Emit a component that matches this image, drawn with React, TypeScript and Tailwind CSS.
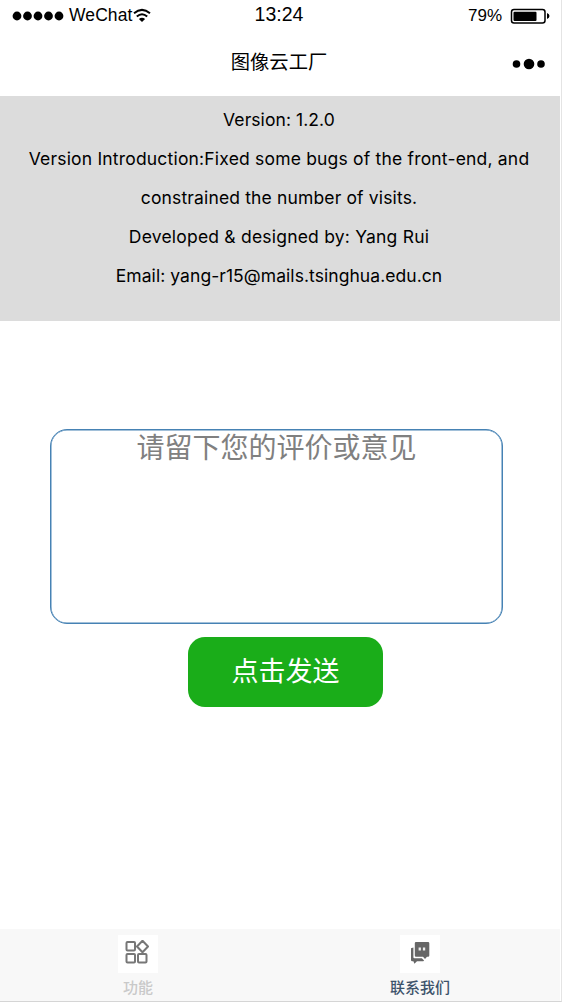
import React from 'react';

function StatusBar() {
  return (
    <div className="grid h-[32px] grid-cols-3 font-['Liberation_Sans',sans-serif] text-[17px] leading-[31px]">
      <div className="flex pl-[12px]">
        <svg className="mt-[11px] mr-[4px] h-[10px] w-[53px] shrink-0" viewBox="0 0 53 10">
          {[5, 15.5, 26, 36.5, 47].map((x) => (
            <circle key={x} cx={x} cy="5" r="4.4" />
          ))}
        </svg>
        <span className="w-[64px] text-[17.5px] leading-[30px] tracking-[0.1px]">WeChat</span>
        <svg className="mt-[8px] h-[15px] w-[18px] shrink-0" viewBox="0 0 18 15" fill="none" stroke="#000">
          <path d="M1 5.2Q9-1.4 17 5.2" strokeWidth="2" />
          <path d="M3.8 8.5Q9 4 14.2 8.5" strokeWidth="2" />
          <path d="M5.9 11.1Q9 8.2 12.1 11.1L9 14Z" fill="#000" stroke="none" />
        </svg>
      </div>
      <div className="pr-[2px] text-center text-[19.5px] leading-[29px]">13:24</div>
      <div className="flex justify-end pr-[10px]">
        <span className="mr-[8px] leading-[32px]">79%</span>
        <svg className="mt-[8px] h-[16px] w-[40px]" viewBox="0 0 40 16">
          <rect x="1.5" y="1.5" width="33.5" height="13.5" rx="2.5" fill="none" stroke="#000" strokeWidth="1.5" />
          <rect x="3.5" y="3.7" width="23" height="9.3" rx="1" />
          <path d="M37 5Q39.5 6 39.5 8T37 11Z" />
        </svg>
      </div>
    </div>
  );
}

export default function App() {
  return (
    <div className="flex h-[1002px] w-[562px] flex-col border-r border-b border-r-[#e4e4e4] border-b-[#d5d5d5] bg-white pr-px font-['Inter','Noto_Sans_CJK_SC',sans-serif] text-black">
      <StatusBar />
      <header className="grid h-[64px] grid-cols-[1fr_auto_1fr] items-center">
        <span />
        <h1 className="mr-[2px] mb-[6px] font-['Noto_Sans_CJK_SC',sans-serif] text-[19.3px] leading-[30px]">图像云工厂</h1>
        <svg className="mr-[14px] h-[12px] w-[34px] justify-self-end" viewBox="0 0 34 12">
          <circle cx="4.5" cy="6" r="3.8" />
          <circle cx="17" cy="6" r="5.3" />
          <circle cx="29" cy="6" r="3.8" />
        </svg>
      </header>
      <section className="h-[225px] bg-[#dcdcdc] pt-[4px] pr-[2px] text-center text-[17.5px] leading-[39px] whitespace-nowrap">
        <p className="tracking-[0.08px]">Version: 1.2.0</p>
        <p className="tracking-[0.19px]">Version Introduction:Fixed some bugs of the front-end, and</p>
        <p className="tracking-[0.15px]">constrained the number of visits.</p>
        <p className="tracking-[0.21px]">Developed &amp; designed by: Yang Rui</p>
        <p className="tracking-[0.06px]">Email: yang-r15@mails.tsinghua.edu.cn</p>
      </section>
      <main className="flex flex-1 flex-col pt-[108px]">
        <textarea
          placeholder="请留下您的评价或意见"
          className="ml-[50px] h-[195px] w-[453px] resize-none rounded-[17px] border border-[#4682b4] px-2 text-center font-['Noto_Sans_CJK_SC',sans-serif] text-[28px] leading-[33px] shadow-[inset_0_0_0_0.5px_#4682b4] outline-none placeholder:text-[#808080]"
        />
        <button className="mt-[13px] ml-[188px] h-[70px] w-[195px] rounded-[17px] bg-[#1aad19] pb-[3px] font-['Noto_Sans_CJK_SC',sans-serif] text-[27px] text-white">
          点击发送
        </button>
      </main>
      <nav className="flex h-[72px] bg-[#f8f8f8] font-['Noto_Sans_CJK_SC',sans-serif] text-[15px] leading-[22px] font-medium">
        <div className="flex w-[276px] flex-col items-center pt-[6px] text-[#c9c9c9]">
          <div className="flex h-[38px] w-[40px] items-center justify-center bg-white">
            <svg className="mr-[2px] mb-[3px] h-[25px] w-[24px]" viewBox="0 0 24 25" fill="none" stroke="#777" strokeWidth="2">
              <rect x="1.5" y="2" width="8.5" height="8.5" rx="1" />
              <rect x="1.5" y="14" width="8.5" height="8.5" rx="1" />
              <rect x="13" y="14" width="8.5" height="8.5" rx="1" />
              <path d="M17.5.8 23 6.5l-5.5 5.7L12 6.5Z" strokeLinejoin="round" />
            </svg>
          </div>
          <span className="mt-[3px]">功能</span>
        </div>
        <div className="flex flex-1 flex-col items-center pt-[6px] pl-[4px] text-[#3d536b]">
          <div className="flex h-[38px] w-[40px] items-center justify-center bg-white">
            <svg className="mb-[3px] h-[24px] w-[20px]" viewBox="0 0 20 24">
              <path d="M6 1h12q1.3 0 1.3 1.3v12.2q0 1.3-1.3 1.3h-1L15 18l-2-2.2H6q-1.2 0-1.2-1.3V2.3Q4.8 1 6 1Z" fill="#666" />
              <path d="M1 7.3l2.4-.8v9.8q0 1 1 1h7.4l2.3 2.2-.8.7H7l-2.6 2.6-1-2.6H2.2Q1 20.2 1 19Z" fill="#666" />
              <path d="M8.6 6.5h2.3v3H8.6zm4.3 0h2.3v3h-2.3z" fill="#eee" />
            </svg>
          </div>
          <span className="mt-[3px]">联系我们</span>
        </div>
      </nav>
    </div>
  );
}
